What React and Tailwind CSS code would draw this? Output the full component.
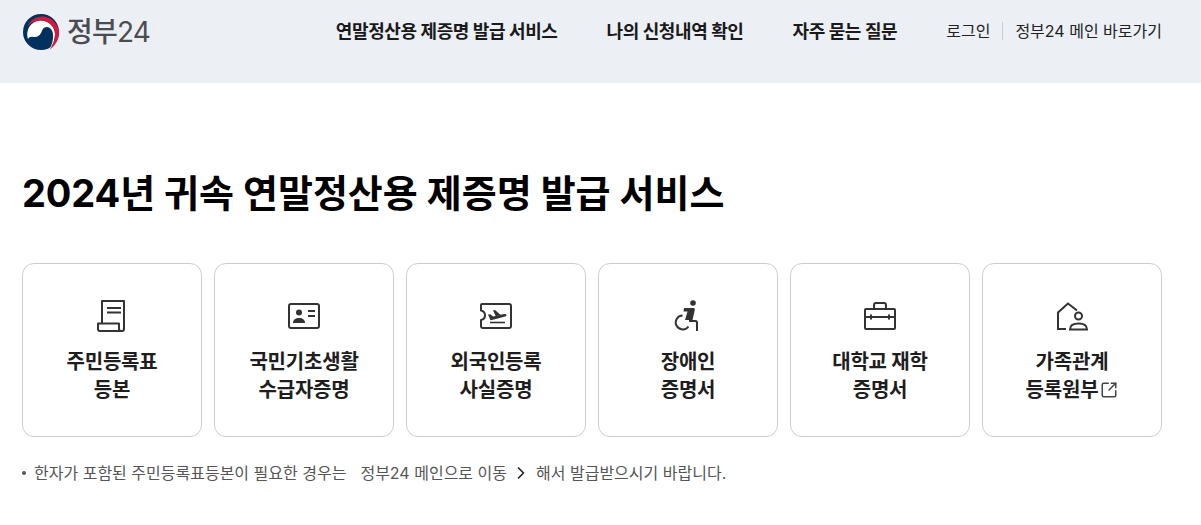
import { ChevronRight, SquareArrowOutUpRight } from 'lucide-react';

const fontStack = "font-['Inter','Noto_Sans_CJK_KR',sans-serif]";

function ScrollIcon() {
  return (
    <svg width="32" height="34" viewBox="0 0 32 34" fill="none" stroke="#333" strokeWidth="2" strokeLinejoin="round">
      <path d="M6 24V2h22v28a2 2 0 0 1-2 2H4" />
      <path d="M2 24.500h21V30a2 2 0 0 0 2 2H4a2 2 0 0 1-2-2z" />
      <path d="M11 9h14M11 13.500h14" />
    </svg>
  );
}

function IdCardIcon() {
  return (
    <svg width="32" height="26" viewBox="0 0 32 26" fill="none" stroke="#333" strokeWidth="2">
      <rect x="1" y="1" width="30" height="24" rx="2" />
      <circle cx="11" cy="9.500" r="3" fill="#333" stroke="none" />
      <path d="M5 20c0-3.500 2.500-5 6-5s6 1.500 6 5z" fill="#333" stroke="none" />
      <path d="M20 8h7M20 13h7" />
    </svg>
  );
}

function TicketIcon() {
  return (
    <svg width="32" height="26" viewBox="0 0 32 26" fill="none" stroke="#333" strokeWidth="2" strokeLinejoin="round">
      <path d="M2 1h27a2 2 0 0 1 2 2v20a2 2 0 0 1-2 2H3a2 2 0 0 1-2-2v-6c2.500-.5 4-2 4-4.500S3.500 8 1 7.500V2a1 1 0 0 1 1-1z" />
      <path d="M8 11.500l2.200-.3 3 2.300 10.800-2.500c2.500-.5 3.500 1.800 1.200 2.600L12 17l-1.500.3z" fill="#333" stroke="none" />
      <path d="M13 7.500l2-.5 5.800 5-5 1.200z" fill="#333" stroke="none" />
      <path d="M10 19.500h15" strokeWidth="1.600" />
    </svg>
  );
}

function WheelchairIcon() {
  return (
    <svg width="24" height="32" viewBox="0 0 24 32" fill="none" className="mr-[4px]">
      <circle cx="19" cy="3" r="2.800" fill="#333" />
      <path d="M10 8h9.500c1 0 1.500.8 1.300 1.800L18.500 20h-7.500l2.500-8.500H9.500z" fill="#333" />
      <path d="M8.500 15.500a7 7 0 1 0 6 11" stroke="#333" strokeWidth="2" />
      <path d="M15 21h6.500a1.500 1.500 0 0 1 1.500 1.500V31" stroke="#333" strokeWidth="2" />
    </svg>
  );
}

function BriefcaseIcon() {
  return (
    <svg width="32" height="28" viewBox="0 0 32 28" fill="none" stroke="#333" strokeWidth="2">
      <rect x="1" y="7" width="30" height="20" rx="1" />
      <path d="M10 7V3a2 2 0 0 1 2-2h8a2 2 0 0 1 2 2v4" />
      <path d="M1 15h30M7 12.500v5M25 12.500v5" />
    </svg>
  );
}

function FamilyIcon() {
  return (
    <svg width="32" height="29" viewBox="0 0 32 29" fill="none" stroke="#333" strokeWidth="2">
      <path d="M10 27H2V10.500L12 1.500l9 7" />
      <circle cx="22.500" cy="14" r="3.500" />
      <path d="M14 27.500c0-4 3.500-6 8.500-6s8.500 2 8.500 6z" />
    </svg>
  );
}

function TaegukLogo() {
  return (
    <svg width="38" height="38" viewBox="0 0 38 38">
      <circle cx="19" cy="19" r="18" fill="#02305f" />
      <path d="M6 26C3 16 10 7.500 19 7.500 27 7.500 33 14 33 21c0 6-2 11-6 16 3-5 4.500-10 4-16-.5-4-3-7-6-7-4 0-4.500 3-6 6-1.500 3-4.500 4.500-7.500 4-2.500-.5-4.500 0-5.500 2z" fill="#fff" />
      <path d="M5 14C8 7 14 3.500 20 3.500 29 3.500 36 10 37 19c0 8-4 14-10 18 4-4 6-10 6-16 0-8-7-13.500-14-13.500-6 0-11 2.500-14 6.500z" fill="#d9173c" />
    </svg>
  );
}

const cards = [
  { icon: ScrollIcon, lines: ['주민등록표', '등본'] },
  { icon: IdCardIcon, lines: ['국민기초생활', '수급자증명'] },
  { icon: TicketIcon, lines: ['외국인등록', '사실증명'] },
  { icon: WheelchairIcon, lines: ['장애인', '증명서'] },
  { icon: BriefcaseIcon, lines: ['대학교 재학', '증명서'] },
  { icon: FamilyIcon, lines: ['가족관계', '등록원부'], external: true },
];

export default function App() {
  return (
    <div className={`min-h-[525px] bg-white text-[#111] ${fontStack}`}>
      <header className="h-[83px] bg-[#eceff4] flex items-start justify-between pl-[22px] pr-[39px]">
        <div className="flex items-center gap-[7px] pt-[13px]">
          <TaegukLogo />
          <span className="text-[28px] leading-[38px] text-[#4a4c50] font-medium tracking-[-0.8px]">
            정부<span className="font-normal">24</span>
          </span>
        </div>
        <div className="flex items-center pt-[10px] h-[42px] box-content">
          <nav className="flex items-center gap-[49px] text-[18px] font-bold text-[#1a1a1a] tracking-[-0.4px] mr-[49px]">
            <span>연말정산용 제증명 발급 서비스</span>
            <span>나의 신청내역 확인</span>
            <span>자주 묻는 질문</span>
          </nav>
          <span className="text-[16px] text-[#222]">로그인</span>
          <span className="w-px h-[18px] bg-[#ccc] mx-[12px]" />
          <span className="text-[16px] text-[#222]">정부24 메인 바로가기</span>
        </div>
      </header>

      <main className="pl-[22px] pr-[39px]">
        <h1 className="mt-[85px] text-[38px] leading-[50px] font-bold text-black">
          <span className="tracking-[-0.1px]">2024년</span> 귀속 연말정산용 제증명 발급 서비스
        </h1>

        <div className="mt-[45px] grid grid-cols-6 gap-[12px]">
          {cards.map((card) => {
            const Icon = card.icon;
            return (
              <div key={card.lines[0]} className="h-[174px] rounded-[12px] border border-[#ccc] flex flex-col items-center">
                <div className="h-[36px] mt-[34px] flex items-center justify-center">
                  <Icon />
                </div>
                <div className="mt-[14px] text-[20px] leading-[28px] font-bold text-[#1e1e1e] text-center tracking-[-0.2px]">
                  <div>{card.lines[0]}</div>
                  <div className="flex items-center justify-center gap-[2px]">
                    {card.lines[1]}
                    {card.external && <SquareArrowOutUpRight size={18} strokeWidth={2} className="text-[#444]" />}
                  </div>
                </div>
              </div>
            );
          })}
        </div>

        <p className="mt-[24px] flex items-center text-[16px] leading-[24px] text-[#555]">
          <span className="w-[4px] h-[4px] rounded-full bg-[#555] mr-[8px]" />
          <span>한자가 포함된 주민등록표등본이 필요한 경우는</span>
          <span className="ml-[14px]">정부24 메인으로 이동</span>
          <ChevronRight size={20} strokeWidth={2} className="text-[#222] ml-[4px] mr-[5px]" />
          <span>해서 발급받으시기 바랍니다.</span>
        </p>
      </main>
    </div>
  );
}
